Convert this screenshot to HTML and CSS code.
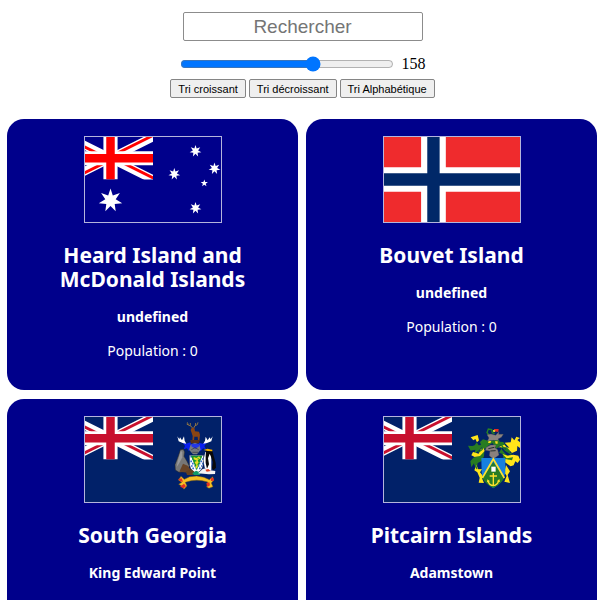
FILE: index.html
```html
<!DOCTYPE html>
<html lang="fr">
<head>
<meta charset="utf-8">
<meta name="viewport" content="width=device-width, initial-scale=1">
<title>Pays du monde</title>
<link rel="stylesheet" href="styles.css">
</head>
<body>
<svg class="defs" aria-hidden="true">
  <defs>
    <clipPath id="canton"><path d="M0 0H60V30H0Z"/></clipPath>
    <clipPath id="quarters"><path d="M30 15H60V30ZM30 15V30H0ZM30 15H0V0ZM30 15V0H60Z"/></clipPath>
    <symbol id="jack" viewBox="0 0 60 30">
      <g clip-path="url(#canton)">
        <path d="M0 0L60 30M60 0L0 30" stroke="#fff" stroke-width="6"/>
        <path d="M0 0L60 30M60 0L0 30" stroke="currentColor" stroke-width="4" clip-path="url(#quarters)"/>
        <path d="M30 0V30M0 15H60" stroke="#fff" stroke-width="10"/>
        <path d="M30 0V30M0 15H60" stroke="currentColor" stroke-width="6"/>
      </g>
    </symbol>
    <path id="star7" fill="#fff" d="M0 -12L2.3 -4.9L9.4 -7.5L5.2 -1.2L11.7 2.7L4.2 3.4L5.2 10.8L0 5.4L-5.2 10.8L-4.2 3.4L-11.7 2.7L-5.2 -1.2L-9.4 -7.5L-2.3 -4.9Z"/>
  </defs>
</svg>

<header class="controls">
  <input class="search" type="text" placeholder="Rechercher" aria-label="Rechercher">
  <div class="range-row">
    <input class="range" id="range" type="range" min="0" max="250" value="158" aria-label="Nombre de pays">
    <label class="range-value" for="range">158</label>
  </div>
  <div class="sorts">
    <button type="button">Tri croissant</button>
    <button type="button">Tri décroissant</button>
    <button type="button">Tri Alphabétique</button>
  </div>
</header>

<main class="countries">
  <article class="card">
    <svg class="flag" viewBox="0 0 170 85" preserveAspectRatio="xMidYMid slice" role="img" aria-label="Drapeau Heard Island and McDonald Islands">
      <path fill="#00008b" d="M0 0H170V85H0Z"/>
      <use href="#jack" width="85" height="42.5" color="#f00"/>
      <use href="#star7" transform="translate(42.5 63.5)"/>
      <use href="#star7" transform="translate(127.5 14) scale(.5)"/>
      <use href="#star7" transform="translate(106.3 37) scale(.5)"/>
      <use href="#star7" transform="translate(146.5 31.5) scale(.5)"/>
      <use href="#star7" transform="translate(127.5 71) scale(.5)"/>
      <path fill="#fff" d="M136.3 42.4L137.2 45L139.9 45L137.7 46.7L138.5 49.3L136.3 47.7L134.1 49.3L134.9 46.7L132.7 45L135.4 45Z"/>
    </svg>
    <h2>Heard Island and McDonald Islands</h2>
    <h4>undefined</h4>
    <p>Population : 0</p>
  </article>

  <article class="card">
    <svg class="flag" viewBox="0 0 22 16" preserveAspectRatio="xMidYMid slice" role="img" aria-label="Drapeau Bouvet Island">
      <path fill="#ef2b2d" d="M0 0H22V16H0Z"/>
      <path stroke="#fff" stroke-width="4" d="M8 0V16M0 8H22"/>
      <path stroke="#002868" stroke-width="2" d="M8 0V16M0 8H22"/>
    </svg>
    <h2>Bouvet Island</h2>
    <h4>undefined</h4>
    <p>Population : 0</p>
  </article>

  <article class="card">
    <svg class="flag" viewBox="0 0 170 85" preserveAspectRatio="xMidYMid slice" role="img" aria-label="Drapeau South Georgia">
      <path fill="#012169" d="M0 0H170V85H0Z"/>
      <use href="#jack" width="85" height="42.5" color="#c8102e"/>
      <g transform="translate(97 -7) scale(.33333)">
        <!-- reindeer crest -->
        <path fill="none" stroke="#a08040" stroke-width="2.5" d="M83 55L79 49L70 45L67 37M76 47L76 39M86 55L89 48L97 44L99 37M91 47L92 39M70 45L65 42"/>
        <path fill="#8a4513" d="M80 53L88 53L90 64L102 65L105 74L103 92L99 92L98 80L88 80L87 93L82 93L83 78L79 66L77 60Z"/>
        <path fill="#5b3018" d="M76 90H104L102 100H77Z"/>
        <!-- mantling and helmet -->
        <path fill="#0a20f0" d="M51 95Q58 94 63 101L76 97L80 108L72 124L66 115L56 118L60 108ZM128 95Q119 94 114 101L102 98L99 108L107 124L114 115L123 118L118 108Z"/>
        <path fill="#fff" d="M37 79L43 88L45 82L51 91L57 79L59 92L64 101L53 99L41 94ZM143 79L137 88L134 82L128 91L122 80L120 92L115 101L126 99L139 94Z"/>
        <path fill="#777b80" d="M77 104L90 98L103 104L107 119L96 133L84 133L72 119Z"/>
        <path fill="#2337e8" d="M80 101H101L103 109L91 116L79 109Z"/>
        <path stroke="#33333d" stroke-width="2" fill="none" d="M79 119L90 113L101 119M82 127H99"/>
        <!-- fur seal -->
        <path fill="#777" stroke="#252525" stroke-width="1.5" d="M46 119L55 118L59 126L57 139L66 154L73 168L66 185L42 187L31 180L30 164L37 146L42 132Z"/>
        <path fill="#99999b" d="M47 123L52 125L52 142L43 159L35 171L38 154Z"/>
        <path fill="#684427" d="M54 161L68 167L81 185L70 188L43 185Z"/>
        <!-- penguin -->
        <path fill="#fff" d="M121 126H139V180L129 186L119 172L115 151Z"/>
        <path fill="#090909" d="M123 119L135 116L142 123L147 141L152 158L153 173L145 181L141 174L144 157L138 140L134 131L129 145L132 163L126 176L122 159L122 139Z"/>
        <path fill="#f4b000" d="M116 120L127 116L142 119L142 124L128 123Z"/>
        <!-- shield -->
        <path fill="#fff" stroke="#171d33" stroke-width="1.5" d="M73 136H116L114 166Q111 184 94 190Q77 184 74 166Z"/>
        <path stroke="#356dcc" stroke-width="5" stroke-dasharray="5 5" fill="none" d="M76 140H115M81 147H115M76 154H115M81 161H115M78 168H112M82 175H109"/>
        <path fill="#16962b" d="M78 137H112L95 181Z"/>
        <path fill="#e8df25" d="M86 141L94 144L102 139L107 145L98 150L101 158L94 165L89 157L93 151L86 148ZM91 170L97 162L99 169L94 176Z"/>
        <path fill="#16962b" d="M91 150L95 152L92 157ZM98 143L102 145L98 148Z"/>
        <!-- ground and ribbon -->
        <path fill="#65401d" d="M62 184L79 178L92 188L84 195H66Z"/>
        <path fill="#109a68" d="M82 190L93 182L108 188L104 195H87Z"/>
        <path fill="#f4f4f5" d="M99 190L113 177L126 174L136 181L151 183L150 192L132 193L115 191Z"/>
        <path fill="#e4401e" d="M121 179L130 177L137 183L125 185Z"/>
        <path fill="#f5bf24" stroke="#6c541d" stroke-width="1.5" d="M48 199L58 208L74 200L95 198L117 202L133 209L143 200L146 211L139 219L144 230L132 235L125 231L128 216Q94 205 61 217L66 228L57 238L50 228L41 223L50 217L40 210Z"/>
        <path fill="#e23125" d="M40 207L50 205L54 215L45 214ZM45 230L57 221L63 229L56 235ZM124 219L133 217L135 226L127 231ZM137 205L145 203L147 212L138 213Z"/>
      </g>
    </svg>
    <h2>South Georgia</h2>
    <h4>King Edward Point</h4>
  </article>

  <article class="card">
    <svg class="flag" viewBox="0 0 170 85" preserveAspectRatio="xMidYMid slice" role="img" aria-label="Drapeau Pitcairn Islands">
      <path fill="#012169" d="M0 0H170V85H0Z"/>
      <use href="#jack" width="85" height="42.5" color="#c8102e"/>
      <g transform="translate(95 -7) scale(.33333)">
        <!-- green and gold mantling -->
        <path fill="#287c22" d="M78 92L63 88L54 96L57 105L50 106L44 97L38 106L31 108L18 107L26 122L40 119L37 133L52 120L60 112L69 117L79 106ZM67 125L57 124L52 137L34 143L25 154L28 172L36 160L44 180L47 159L58 154L66 139ZM110 95L124 96L132 109L146 118L144 127L132 122L129 111L119 115L111 128L122 132L125 149L138 164L148 158L158 151L149 139L134 136L121 121Z"/>
        <path fill="#ffe51a" d="M26 82L47 75L51 91L45 97L40 87L34 91ZM64 112L55 119L50 131L33 126L28 136L38 141L54 138L68 123ZM43 165L37 181L46 187L53 203L50 218L66 219L60 205L63 198L54 187L61 177L49 178ZM108 112L127 104L139 117L150 129L165 122L166 108L174 114L174 97L166 90L174 84L163 80L157 91L149 82L146 97L128 98L142 113L132 112ZM121 132L137 137L154 134L169 137L174 149L167 159L160 154L155 166L146 169L129 157L130 147L150 151L153 142L134 145ZM132 165L144 184L137 195L144 219L127 215L134 198L127 187Z"/>
        <path stroke="#287c22" stroke-width="4" fill="none" d="M68 104L60 119L49 127M118 105L130 121L149 133M48 145L39 163L45 177"/>
        <!-- crest -->
        <path fill="none" stroke="#288523" stroke-width="4" d="M81 75L75 68L79 57L89 59L91 68L98 71"/>
        <path fill="#e72d23" d="M96 57H110L109 66L96 64Z"/>
        <path fill="#f4dc29" d="M93 60L100 61L99 66L93 65Z"/>
        <path fill="#8c8480" stroke="#55524f" stroke-width="1" d="M75 74L87 72L101 76L111 65L110 73L124 73L118 82L108 87L112 94L95 91L76 94L81 84Z"/>
        <path fill="#287c22" d="M74 93L111 91L115 106L103 116L91 99L76 109Z"/>
        <path fill="#f6df23" d="M80 93H88L85 99H78ZM99 94H107V101H101Z"/>
        <path fill="#8a817d" stroke="#55524f" stroke-width="1" d="M73 112L86 105L102 105L99 113L107 119L111 135L94 147L82 137L84 123L70 121Z"/>
        <path fill="none" stroke="#252d2f" stroke-width="3" d="M79 116L97 112M85 123L101 122"/>
        <!-- shield -->
        <path fill="#1680e0" d="M58 144H130V188Q126 214 94 235Q62 214 59 188Z"/>
        <path fill="#277c25" d="M94 156L126 205Q118 222 94 234Q69 221 61 204Z"/>
        <path fill="none" stroke="#ffe12e" stroke-width="5" d="M61 204L94 147L127 204"/>
        <path fill="#fff" d="M88 170H101V185H88Z"/>
        <path fill="none" stroke="#ffe12e" stroke-width="4" d="M94 189V227M83 198H105M78 213Q82 226 94 227Q107 225 110 212"/>
        <path fill="#ffe12e" d="M75 217L76 208L84 214ZM105 214L112 207L114 216Z"/>
      </g>
    </svg>
    <h2>Pitcairn Islands</h2>
    <h4>Adamstown</h4>
  </article>
</main>
</body>
</html>
```
FILE: styles.css
```css
* {
  box-sizing: border-box;
}

body {
  margin: 0;
  background: #fff;
  font-family: "Liberation Serif", serif;
}

.defs {
  display: block;
  width: 0;
  height: 0;
}

.controls {
  display: flex;
  flex-direction: column;
  align-items: center;
  padding: 12px 0 21px 5px;
}

.search {
  width: 240px;
  height: 29px;
  padding: 0;
  border: 1px solid #8c8c8c;
  border-radius: 2px;
  font: 19px "Liberation Sans", sans-serif;
  text-align: center;
}

.range-row {
  display: flex;
  align-items: center;
  gap: 8px;
  height: 20px;
  margin: 13px 0 5px;
}

.range {
  width: 214px;
  height: 14px;
  margin: 0;
}

.range-value {
  font-size: 16px;
}

.sorts {
  display: flex;
  gap: 3px;
}

.sorts button {
  height: 19px;
  padding: 0 7px;
  border: 1px solid #858585;
  border-radius: 2px;
  background: #efefef;
  color: #000;
  font: 11px "Liberation Sans", sans-serif;
}

.countries {
  display: grid;
  grid-template-columns: 1fr 1fr;
  gap: 9px 8px;
  padding: 0 3px 9px 7px;
}

.card {
  display: flex;
  flex-direction: column;
  align-items: center;
  min-height: 271px;
  padding: 17px 40px;
  border-radius: 17px;
  background: #00008b;
  color: #fff;
  font-family: "Lucida Sans", "Noto Sans", sans-serif;
  text-align: center;
}

.flag {
  width: 138px;
  height: 87px;
  border: 1px solid #b4b4dc;
}

.card h2 {
  margin: 20px 0 17px;
  font-size: 21px;
  line-height: 24px;
}

.card h4 {
  margin: 0 0 16px;
  font-size: 14px;
  line-height: 18px;
}

.card p {
  margin: 0;
  font-size: 14px;
  line-height: 18px;
}
```
